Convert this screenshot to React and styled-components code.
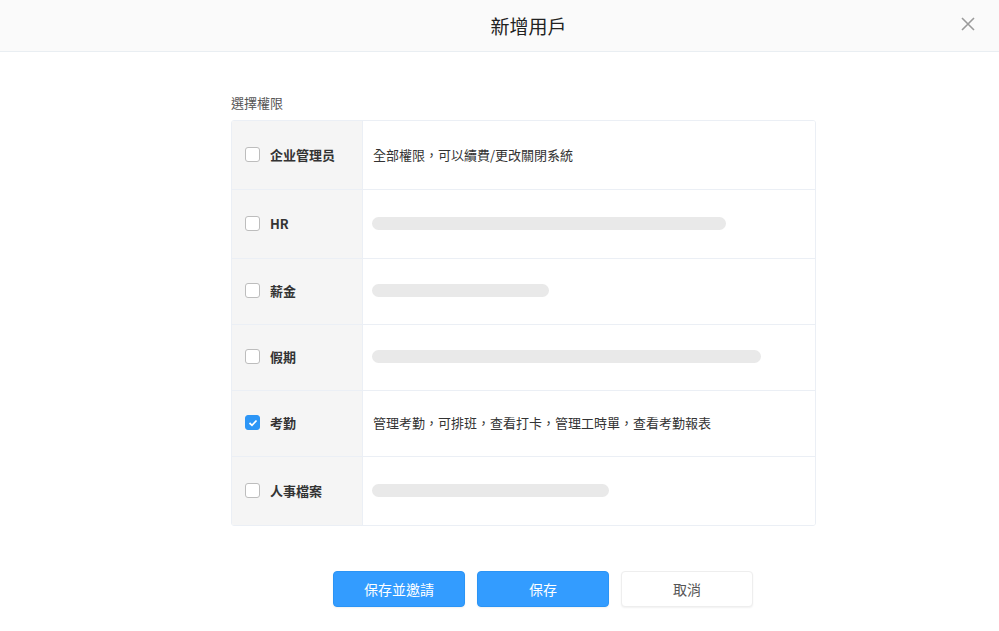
import styled, { createGlobalStyle } from 'styled-components';

const GlobalStyle = createGlobalStyle`
  html, body { margin: 0; padding: 0; background: #fff; }
  body { font-family: "Noto Sans CJK TC", "Noto Sans", sans-serif; color: #333; }
`

export default function App() {
  const rows = [
    {name: '企业管理员', desc: '全部權限，可以續費/更改關閉系統', h: 68},
    {name: 'HR', bar: 354, h: 68},
    {name: '薪金', bar: 177, h: 65},
    {name: '假期', bar: 389, h: 65},
    {name: '考勤', desc: '管理考勤，可排班，查看打卡，管理工時單，查看考勤報表', checked: true, h: 65},
    {name: '人事檔案', bar: 237, h: 68},
  ]
  return <Page>
    <GlobalStyle />
    <Header>
      <Title>新增用戶</Title>
      <Close aria-label='close'>
        <svg width='14' height='14' viewBox='0 0 14 14'>
          <path d='M1 1L13 13M13 1L1 13' stroke='#9a9a9a' strokeWidth='1.6' />
        </svg>
      </Close>
    </Header>
    <Body>
      <Label>選擇權限</Label>
      <Table>
        {rows.map((row, index) => (
          <Row key={index} h={row.h}>
            <NameCell>
              <Check checked={!!row.checked}>
                {row.checked && <svg width='10' height='8' viewBox='0 0 10 8'>
                  <path d='M1.5 4L4 6.3L8.5 1.5' stroke='#fff' strokeWidth='1.7' fill='none' />
                </svg>}
              </Check>
              <Name>{row.name}</Name>
            </NameCell>
            <DescCell>
              {row.desc ? <Desc>{row.desc}</Desc> : <Bar style={{width: row.bar}} />}
            </DescCell>
          </Row>
        ))}
      </Table>
      <Actions>
        <Button primary>保存並邀請</Button>
        <Button primary>保存</Button>
        <Button>取消</Button>
      </Actions>
    </Body>
  </Page>
}

const Page = styled.div`
  width: 999px;
  height: 631px;
  overflow: hidden;
`
const Header = styled.header`
  position: relative;
  box-sizing: border-box;
  height: 52px;
  padding-left: 58px;
  background: #fafafa;
  border-bottom: 1px solid #e9eef2;
  display: flex;
  align-items: center;
  justify-content: center;
`
const Title = styled.h1`
  margin: 0;
  font-size: 19px;
  font-weight: 400;
  color: #222;
`
const Close = styled.button`
  position: absolute;
  right: 24px;
  top: 17px;
  padding: 0;
  border: 0;
  background: none;
  width: 14px;
  height: 14px;
  display: flex;
`
const Body = styled.div`
  width: 585px;
  margin-left: 231px;
  padding-top: 42px;
`
const Label = styled.div`
  font-size: 13px;
  color: #555;
  line-height: 18px;
  margin-bottom: 8px;
`
const Table = styled.div`
  border: 1px solid #ebeff5;
  border-radius: 3px;
  overflow: hidden;
`
const Row = styled.div`
  display: flex;
  height: ${props => props.h}px;
  & + & { border-top: 1px solid #ebeff5; }
`
const NameCell = styled.div`
  box-sizing: border-box;
  width: 131px;
  flex-shrink: 0;
  background: #f5f5f5;
  border-right: 1px solid #ebeff5;
  display: flex;
  align-items: center;
  padding: 0 0 2px 13px;
  gap: 10px;
`
const Check = styled.span`
  box-sizing: border-box;
  width: 15px;
  height: 15px;
  border-radius: 3px;
  border: 1px solid ${props => props.checked ? '#2d96f6' : '#bdbdbd'};
  background: ${props => props.checked ? '#2d96f6' : '#fff'};
  display: flex;
  align-items: center;
  justify-content: center;
`
const Name = styled.span`
  font-size: 13px;
  font-weight: 600;
  color: #333;
`
const DescCell = styled.div`
  flex: 1;
  display: flex;
  align-items: center;
  padding: 0 0 2px 10px;
  background: #fff;
`
const Desc = styled.span`
  font-size: 13px;
  color: #333;
`
const Bar = styled.div`
  height: 13px;
  border-radius: 7px;
  background: #e9e9e9;
  margin-left: -1px;
`
const Actions = styled.div`
  display: flex;
  gap: 12px;
  margin-top: 45px;
  padding-left: 102px;
`
const Button = styled.button`
  width: 132px;
  height: 36px;
  border-radius: 4px;
  font-family: inherit;
  font-size: 14px;
  border: 1px solid ${props => props.primary ? '#2b94f5' : '#eeeeee'};
  background: ${props => props.primary ? '#339cff' : '#fff'};
  color: ${props => props.primary ? '#fff' : '#555'};
  box-shadow: 0 1px 2px rgba(0,0,0,0.06);
`
